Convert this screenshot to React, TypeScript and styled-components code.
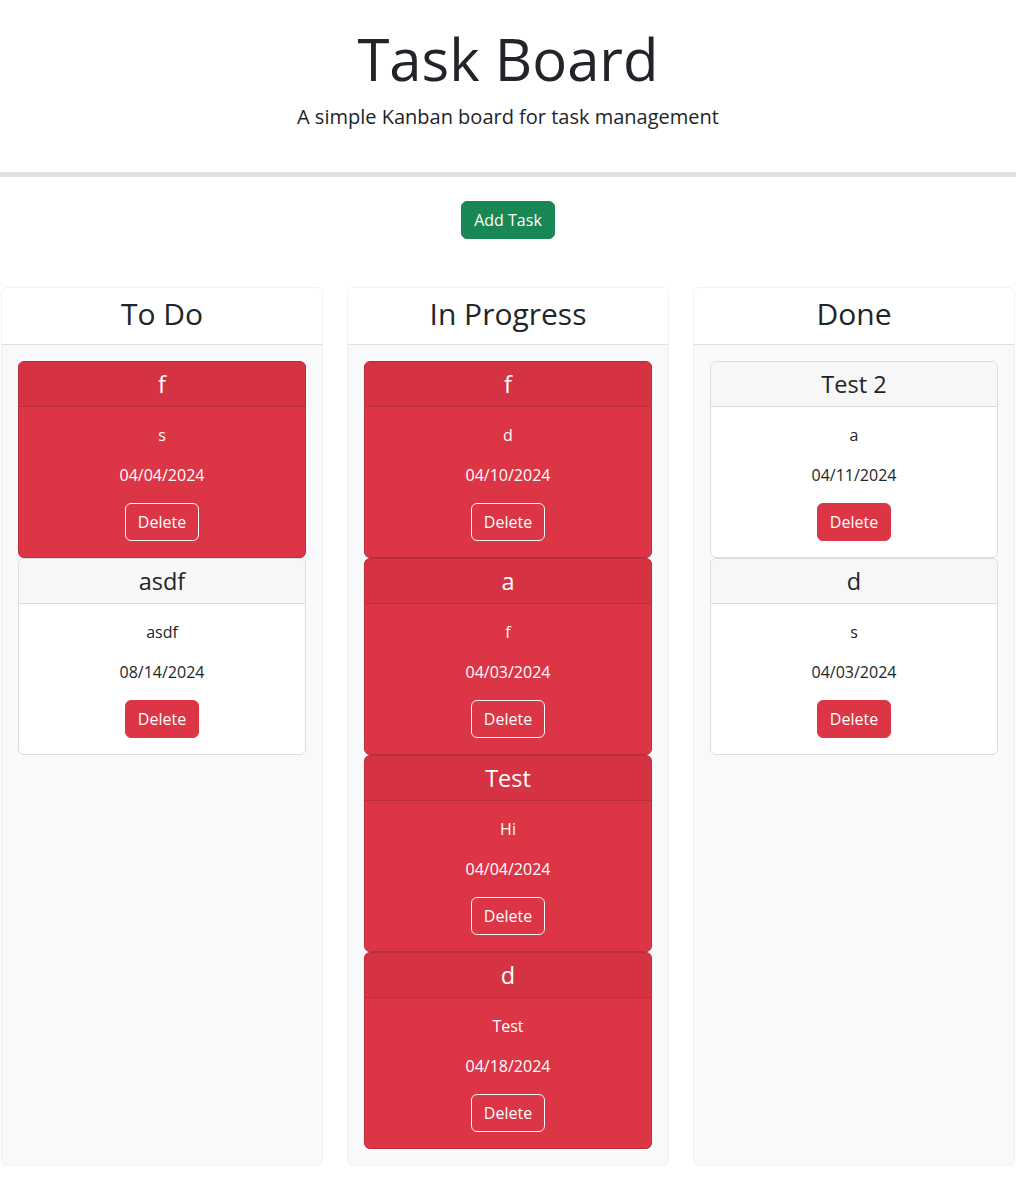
import React from "react";
import styled, { createGlobalStyle } from "styled-components";

const GlobalStyle = createGlobalStyle`
  * { box-sizing: border-box; }
  html, body { margin: 0; padding: 0; background: #ffffff; }
  body {
    font-family: "Open Sans", "Liberation Sans", sans-serif;
    color: #212529;
    font-size: 16px;
    line-height: 1.5;
  }
`;

type Variant = "danger" | "light";

interface Task {
  title: string;
  description: string;
  date: string;
  variant: Variant;
}

interface Column {
  title: string;
  tasks: Task[];
}

const columns: Column[] = [
  {
    title: "To Do",
    tasks: [
      { title: "f", description: "s", date: "04/04/2024", variant: "danger" },
      { title: "asdf", description: "asdf", date: "08/14/2024", variant: "light" },
    ],
  },
  {
    title: "In Progress",
    tasks: [
      { title: "f", description: "d", date: "04/10/2024", variant: "danger" },
      { title: "a", description: "f", date: "04/03/2024", variant: "danger" },
      { title: "Test", description: "Hi", date: "04/04/2024", variant: "danger" },
      { title: "d", description: "Test", date: "04/18/2024", variant: "danger" },
    ],
  },
  {
    title: "Done",
    tasks: [
      { title: "Test 2", description: "a", date: "04/11/2024", variant: "light" },
      { title: "d", description: "s", date: "04/03/2024", variant: "light" },
    ],
  },
];

const Page = styled.div`
  width: 1016px;
  display: flex;
  flex-direction: column;
  align-items: stretch;
`;

const Header = styled.header`
  display: flex;
  flex-direction: column;
  align-items: center;
  padding: 20px 0 40px;
  border-bottom: 5px solid #dee2e6;
`;

const Title = styled.h1`
  margin: 0;
  font-size: 58px;
  font-weight: 400;
  line-height: 77px;
  color: #212529;
`;

const Subtitle = styled.p`
  margin: 5px 0 0;
  font-size: 20px;
  font-weight: 400;
  line-height: 30px;
  color: #212529;
`;

const Toolbar = styled.div`
  display: flex;
  justify-content: center;
  padding: 24px 0 48px;
`;

const AddButton = styled.button`
  font-family: inherit;
  font-size: 16px;
  line-height: 24px;
  padding: 6px 12px;
  border: 1px solid #198754;
  border-radius: 6px;
  background: #198754;
  color: #ffffff;
  cursor: pointer;
`;

const Board = styled.main`
  display: grid;
  grid-template-columns: repeat(3, 322px);
  gap: 24px;
  margin-left: 1px;
  align-items: stretch;
`;

const ColumnCard = styled.section`
  display: flex;
  flex-direction: column;
  border: 1px solid #f1f2f4;
  border-radius: 6px;
  overflow: hidden;
  background: #f8f9fa;
`;

const ColumnHeader = styled.div`
  background: #ffffff;
  border-bottom: 1px solid #dee2e6;
  padding: 8px 16px 12px;
  text-align: center;
`;

const ColumnTitle = styled.h2`
  margin: 0;
  font-size: 30px;
  font-weight: 400;
  line-height: 36px;
  color: #212529;
`;

const ColumnBody = styled.div`
  flex: 1;
  display: flex;
  flex-direction: column;
  padding: 16px;
`;

const TaskCard = styled.div<{ $variant: Variant }>`
  display: flex;
  flex-direction: column;
  border-radius: 6px;
  overflow: hidden;
  border: 1px solid ${(p) => (p.$variant === "danger" ? "#bb2d3b" : "#dadcdf")};
  background: ${(p) => (p.$variant === "danger" ? "#dc3545" : "#ffffff")};
  color: ${(p) => (p.$variant === "danger" ? "#ffffff" : "#212529")};
  text-align: center;
`;

const TaskHeader = styled.div<{ $variant: Variant }>`
  padding: 8px 16px;
  background: ${(p) => (p.$variant === "danger" ? "#d53343" : "#f7f7f7")};
  border-bottom: 1px solid ${(p) => (p.$variant === "danger" ? "#bb2d3b" : "#dadcdf")};
`;

const TaskTitle = styled.h4`
  margin: 0;
  font-size: 23.5px;
  font-weight: 400;
  line-height: 28px;
`;

const TaskBody = styled.div`
  display: flex;
  flex-direction: column;
  align-items: center;
  gap: 16px;
  padding: 16px;
`;

const TaskText = styled.p`
  margin: 0;
  font-size: 16px;
  line-height: 24px;
`;

const DeleteButton = styled.button<{ $variant: Variant }>`
  font-family: inherit;
  font-size: 16px;
  line-height: 24px;
  padding: 6px 12px;
  border-radius: 6px;
  cursor: pointer;
  border: 1px solid ${(p) => (p.$variant === "danger" ? "#f8f9fa" : "#dc3545")};
  background: ${(p) => (p.$variant === "danger" ? "transparent" : "#dc3545")};
  color: #ffffff;
`;

const TaskItem: React.FC<{ task: Task }> = ({ task }) => (
  <TaskCard $variant={task.variant}>
    <TaskHeader $variant={task.variant}>
      <TaskTitle>{task.title}</TaskTitle>
    </TaskHeader>
    <TaskBody>
      <TaskText>{task.description}</TaskText>
      <TaskText>{task.date}</TaskText>
      <DeleteButton $variant={task.variant}>Delete</DeleteButton>
    </TaskBody>
  </TaskCard>
);

export default function App() {
  return (
    <>
      <GlobalStyle />
      <Page>
        <Header>
          <Title>Task Board</Title>
          <Subtitle>A simple Kanban board for task management</Subtitle>
        </Header>
        <Toolbar>
          <AddButton>Add Task</AddButton>
        </Toolbar>
        <Board>
          {columns.map((col) => (
            <ColumnCard key={col.title}>
              <ColumnHeader>
                <ColumnTitle>{col.title}</ColumnTitle>
              </ColumnHeader>
              <ColumnBody>
                {col.tasks.map((t, i) => (
                  <TaskItem key={i} task={t} />
                ))}
              </ColumnBody>
            </ColumnCard>
          ))}
        </Board>
      </Page>
    </>
  );
}
